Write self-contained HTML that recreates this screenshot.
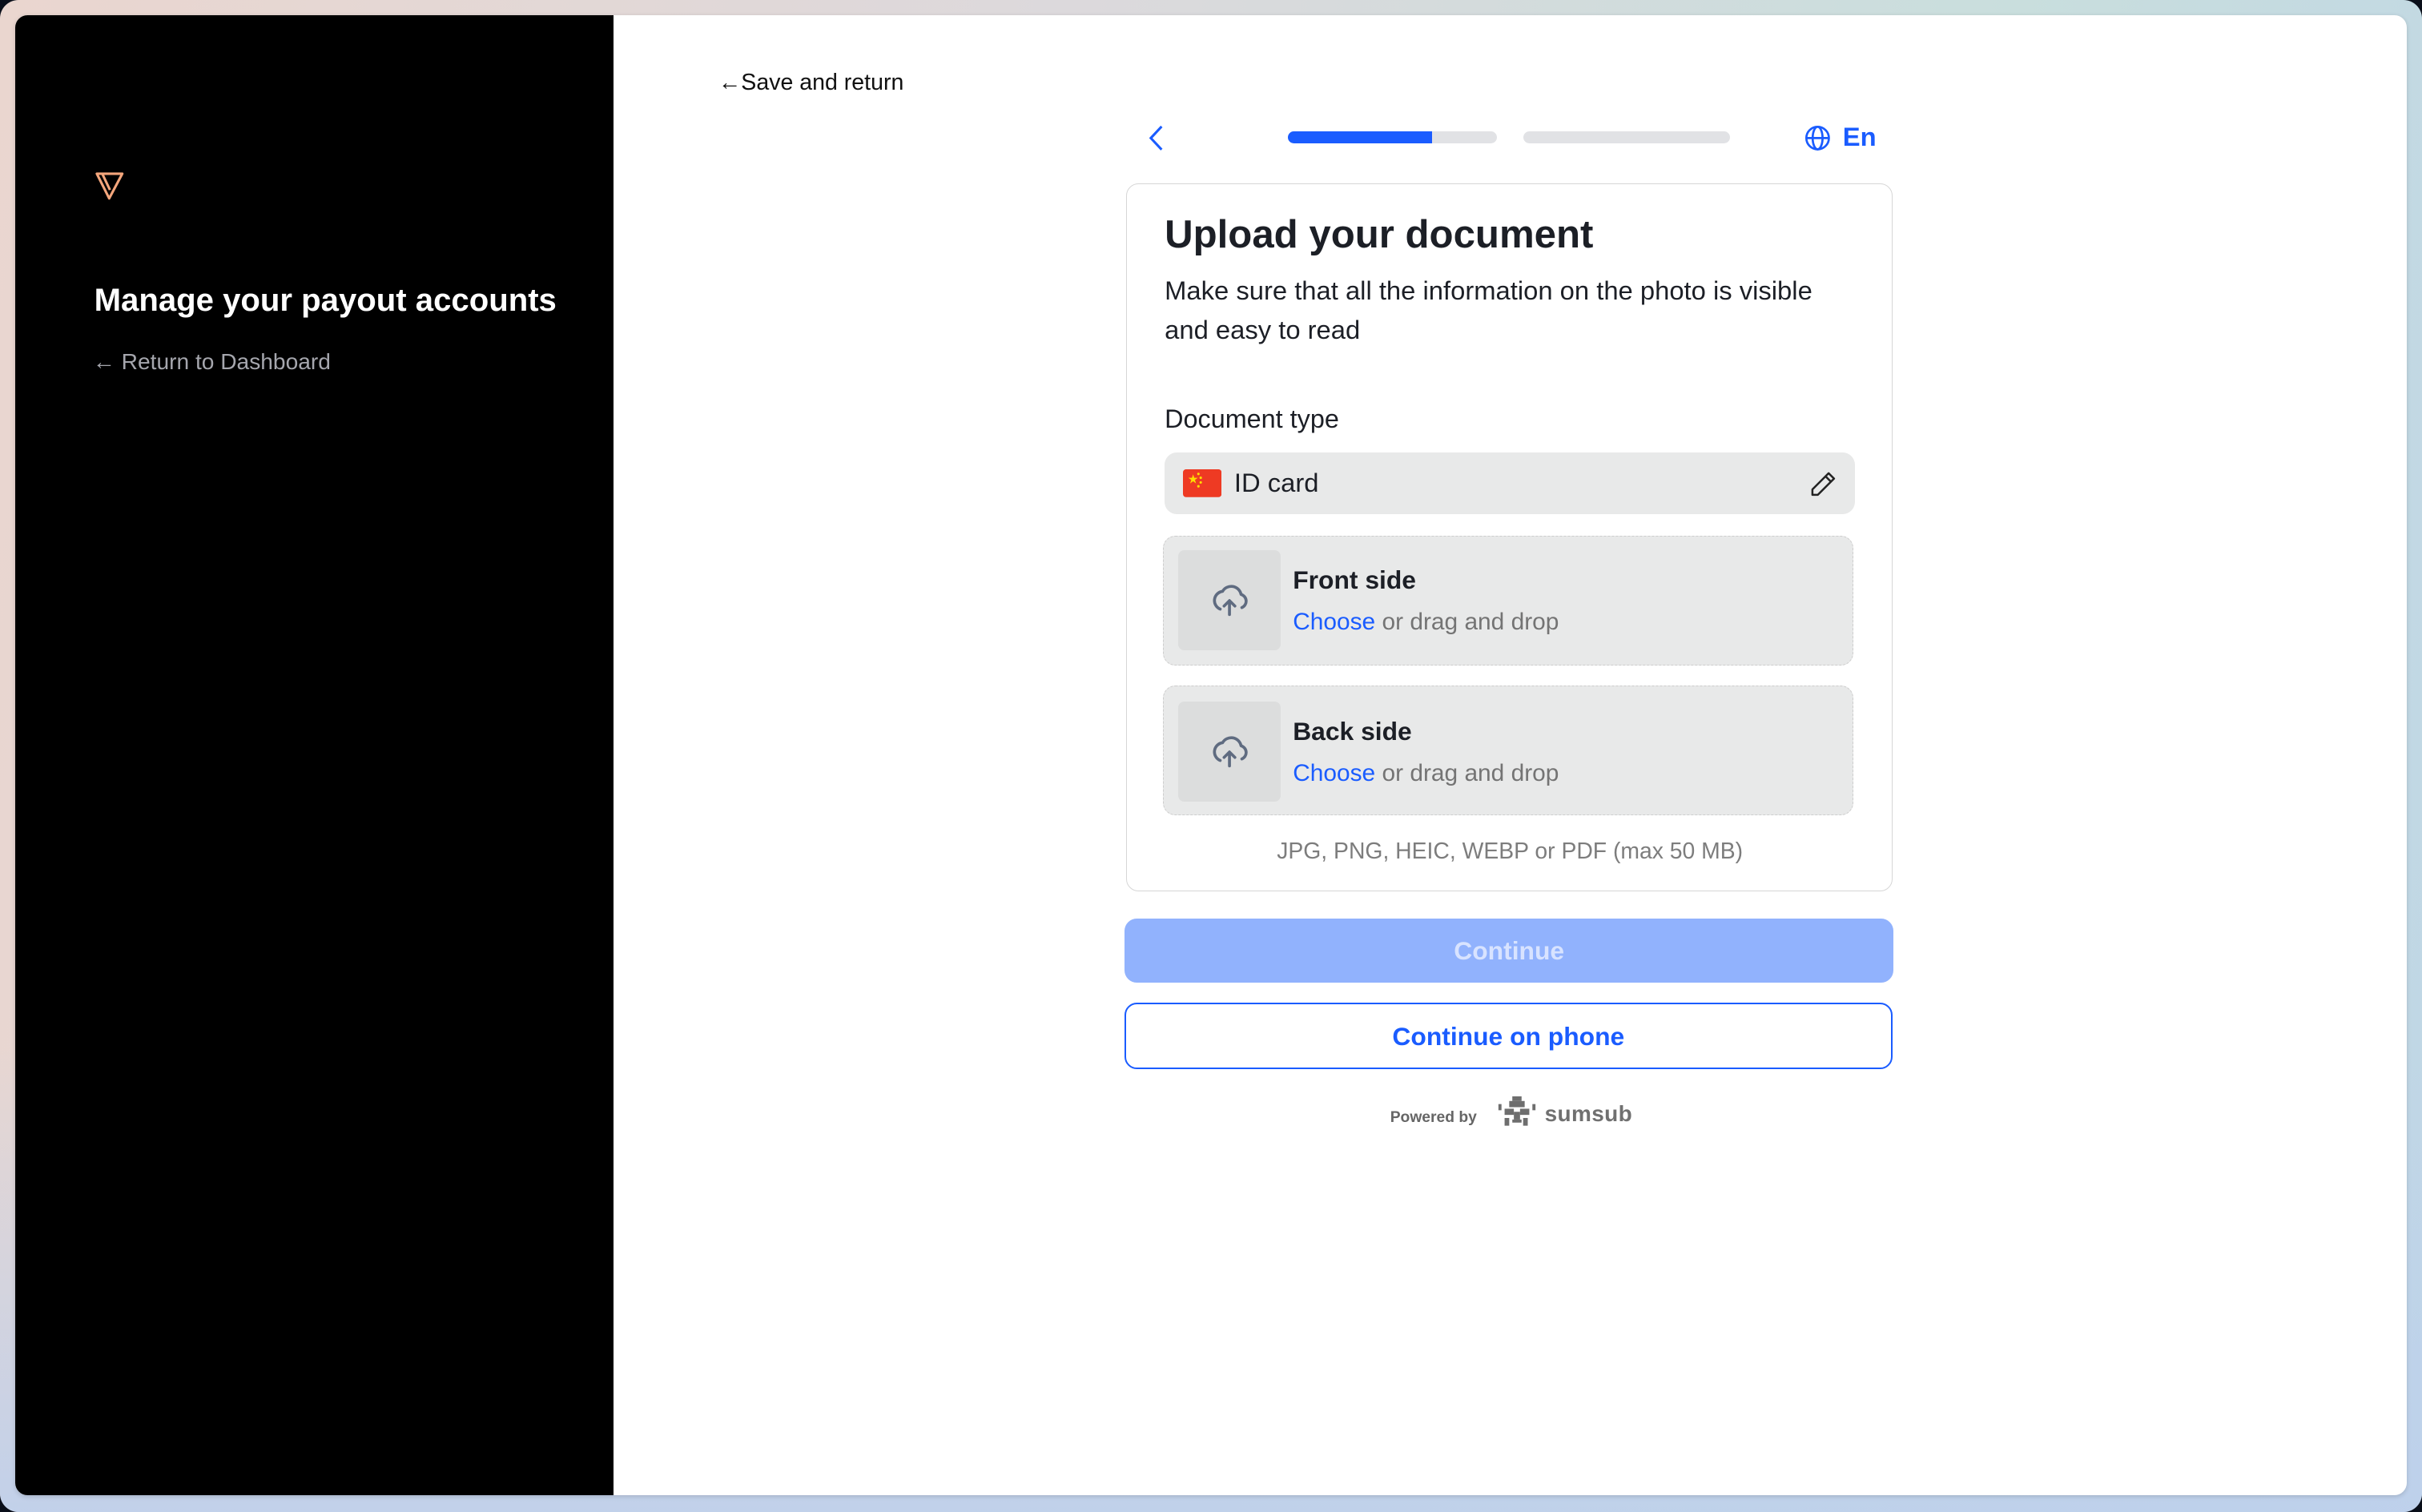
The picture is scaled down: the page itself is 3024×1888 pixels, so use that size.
<!DOCTYPE html>
<html><head><meta charset="utf-8">
<style>
html,body{margin:0;padding:0;width:3024px;height:1888px;overflow:hidden;background:#0a0f1a;}
#z{zoom:1.92857;width:1568px;height:979px;position:relative;font-family:"Liberation Sans",sans-serif;}
.frame{position:absolute;left:0;top:0;width:1568px;height:979px;border-radius:12px;background:linear-gradient(100deg,#ead6cf 0%,#dcd9dc 40%,#c9dedd 75%,#bfd6e6 100%);}
.frame:after{content:"";position:absolute;left:0;right:0;bottom:0;height:300px;border-radius:0 0 12px 12px;background:linear-gradient(180deg,rgba(190,205,235,0),rgba(190,208,236,.9));}
.win{position:absolute;left:10px;top:10px;width:1548px;height:958px;border-radius:8px;background:#fff;overflow:hidden;z-index:1;box-shadow:0 1px 3px rgba(0,0,0,.15);}
.side{position:absolute;left:0;top:0;width:387px;height:958px;background:#000;}
.abs{position:absolute;white-space:nowrap;}
</style></head><body><div id="z">
<div class="frame"></div>
<div class="win">
 <div class="side">
  <svg class="abs" style="left:51px;top:101px" width="20" height="19" viewBox="0 0 20 19"><path d="M1.5 1.5H18L9.5 17.5Z M5 1.5L10 12" fill="none" stroke="#f4a67c" stroke-width="1.6" stroke-linejoin="round"/></svg>
  <div class="abs" style="left:51px;top:173px;font-size:20.8px;font-weight:bold;color:#fff;">Manage your payout accounts</div>
  <div class="abs" style="left:50px;top:216px;font-size:14.6px;color:#a5a6ad;">&#8592; Return to Dashboard</div>
 </div>
 <div class="abs" style="left:455px;top:35px;font-size:14.8px;color:#111;">&#8592;Save and return</div>
 <svg class="abs" style="left:733px;top:71px" width="12" height="17" viewBox="0 0 12 17"><path d="M9 1L2 8.5L9 16" fill="none" stroke="#1a5cff" stroke-width="1.6"/></svg>
 <div class="abs" style="left:824px;top:75px;width:135px;height:8px;border-radius:4px;background:#e1e2e5;overflow:hidden"><div style="width:93px;height:8px;background:#1a5cff"></div></div>
 <div class="abs" style="left:976px;top:75px;width:134px;height:8px;border-radius:4px;background:#e1e2e5;"></div>
 <svg class="abs" style="left:1158px;top:71px" width="17" height="17" viewBox="0 0 17 17"><g fill="none" stroke="#1a5cff" stroke-width="1.4"><circle cx="8.5" cy="8.5" r="7.3"/><ellipse cx="8.5" cy="8.5" rx="3.2" ry="7.3"/><path d="M1.2 8.5H15.8"/></g></svg>
 <div class="abs" style="left:1183px;top:69px;font-size:17px;font-weight:bold;color:#1a5cff;">En</div>
 <div class="abs" style="left:719px;top:109px;width:495px;height:457px;border:1px solid #d6d6d6;border-radius:8px;"></div>
 <div class="abs" style="left:744px;top:127px;font-size:25.5px;font-weight:bold;color:#1c1f26;">Upload your document</div>
 <div class="abs" style="left:744px;top:166px;font-size:17px;line-height:25px;color:#1c1f26;white-space:normal;width:447px;">Make sure that all the information on the photo is visible and easy to read</div>
 <div class="abs" style="left:744px;top:252px;font-size:16.8px;color:#1c1f26;">Document type</div>
 <div class="abs" style="left:744px;top:283px;width:447px;height:40px;border-radius:8px;background:#e8e9e9;"></div>
 <svg class="abs" style="left:756px;top:294px" width="25" height="18" viewBox="0 0 25 18"><rect width="25" height="18" rx="2" fill="#ee3a23"/><text x="3" y="9" font-size="8" fill="#ffde00" font-family="DejaVu Sans">★</text><circle cx="10" cy="3" r=".8" fill="#ffde00"/><circle cx="11.5" cy="5.5" r=".8" fill="#ffde00"/><circle cx="11.5" cy="8.5" r=".8" fill="#ffde00"/><circle cx="10" cy="11" r=".8" fill="#ffde00"/></svg>
 <div class="abs" style="left:789px;top:293px;font-size:17px;color:#1c1f26;">ID card</div>
 <svg class="abs" style="left:1162px;top:295px" width="17" height="17" viewBox="0 0 17 17"><path d="M12 1.5L15.5 5L5 15.5H1.5V12Z M10 3.5L13.5 7" fill="none" stroke="#222" stroke-width="1.3" stroke-linejoin="round"/></svg>

 <div class="abs" style="left:743px;top:337px;width:446px;height:83px;border:1px dashed #cdcdcd;border-radius:8px;background:#e8e9e9;"></div>
 <div class="abs" style="left:753px;top:346px;width:66px;height:65px;border-radius:4px;background:#dcdddd;"></div>
 <svg class="abs" style="left:773px;top:365px" width="26" height="26" viewBox="0 0 26 26"><path d="M7 19.5A6 6 0 0 1 8.5 8A6.5 6.5 0 0 1 20.5 10A4.5 4.5 0 0 1 21 18.5M13 23V14.5M9.5 17.5L13 14L16.5 17.5" fill="none" stroke="#5f6b80" stroke-width="1.9" stroke-linecap="round" stroke-linejoin="round"/></svg>
 <div class="abs" style="left:827px;top:356px;font-size:16.5px;font-weight:bold;color:#1c1f26;">Front side</div>
 <div class="abs" style="left:827px;top:384px;font-size:15.5px;color:#747474;"><span style="color:#1a5cff">Choose</span> or drag and drop</div>

 <div class="abs" style="left:743px;top:434px;width:446px;height:83px;border:1px dashed #cdcdcd;border-radius:8px;background:#e8e9e9;"></div>
 <div class="abs" style="left:753px;top:444px;width:66px;height:65px;border-radius:4px;background:#dcdddd;"></div>
 <svg class="abs" style="left:773px;top:463px" width="26" height="26" viewBox="0 0 26 26"><path d="M7 19.5A6 6 0 0 1 8.5 8A6.5 6.5 0 0 1 20.5 10A4.5 4.5 0 0 1 21 18.5M13 23V14.5M9.5 17.5L13 14L16.5 17.5" fill="none" stroke="#5f6b80" stroke-width="1.9" stroke-linecap="round" stroke-linejoin="round"/></svg>
 <div class="abs" style="left:827px;top:454px;font-size:16.5px;font-weight:bold;color:#1c1f26;">Back side</div>
 <div class="abs" style="left:827px;top:482px;font-size:15.5px;color:#747474;"><span style="color:#1a5cff">Choose</span> or drag and drop</div>

 <div class="abs" style="left:719px;top:533px;width:497px;text-align:center;font-size:14.7px;color:#7d7d7d;">JPG, PNG, HEIC, WEBP or PDF (max 50 MB)</div>
 <div class="abs" style="left:718px;top:585px;width:498px;height:41px;border-radius:8px;background:#91b2fd;color:#d8e3ff;font-size:16.5px;font-weight:bold;text-align:center;line-height:42px;">Continue</div>
 <div class="abs" style="left:718px;top:639px;width:495px;height:41px;border-radius:8px;border:1.5px solid #1a5cff;color:#1a5cff;font-size:16.5px;font-weight:bold;text-align:center;line-height:42px;">Continue on phone</div>
 <div class="abs" style="left:890px;top:708px;font-size:10px;font-weight:bold;color:#666;">Powered by</div>
 <svg class="abs" style="left:958px;top:700px" width="28" height="20" viewBox="0 0 28 20"><g fill="#6e6e6e"><rect x="11" y="0" width="6" height="3"/><rect x="9" y="3" width="10" height="4"/><rect x="2" y="5" width="2" height="4"/><rect x="24" y="5" width="2" height="4"/><rect x="6" y="8" width="6" height="4"/><rect x="16" y="8" width="6" height="4"/><rect x="12" y="10" width="4" height="5"/><rect x="6" y="14" width="3" height="5"/><rect x="18" y="14" width="3" height="5"/><rect x="11" y="15" width="6" height="2"/></g></svg>
 <div class="abs" style="left:990px;top:703px;font-size:14.5px;font-weight:bold;color:#707070;letter-spacing:.2px;">sumsub</div>
</div>
</div></body></html>
